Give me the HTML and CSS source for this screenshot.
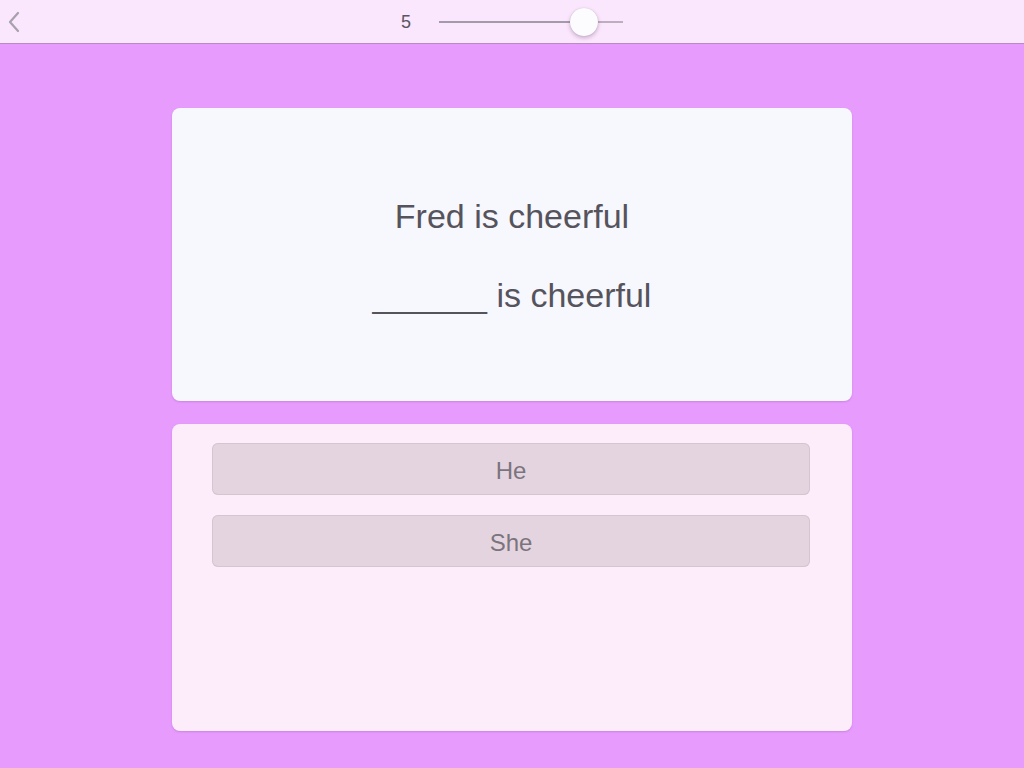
FILE: index.html
```html
<!DOCTYPE html>
<html>
<head>
<meta charset="utf-8">
<link rel="stylesheet" href="styles.css">
</head>
<body>
<header class="topbar">
  <button class="back" aria-label="Back">
    <svg width="14" height="22" viewBox="0 0 14 22"><path d="M11 2 L3 11 L11 20" fill="none" stroke="#a7a0ad" stroke-width="2.2" stroke-linecap="round" stroke-linejoin="round"/></svg>
  </button>
  <div class="level">
    <span class="num">5</span>
    <div class="slider">
      <div class="track-fill"></div>
      <div class="track-rest"></div>
      <div class="thumb"></div>
    </div>
  </div>
</header>
<main class="content">
  <section class="card question">
    <p class="line">Fred is cheerful</p>
    <p class="line"><span class="blank">_______</span> is cheerful</p>
  </section>
  <section class="card answers">
    <button class="choice">He</button>
    <button class="choice">She</button>
  </section>
</main>
</body>
</html>
```
FILE: styles.css
```css
html, body {
  margin: 0;
  padding: 0;
}
body {
  width: 1024px;
  height: 768px;
  background: #e79bfd;
  font-family: "Liberation Sans", Arial, sans-serif;
  overflow: hidden;
}
.topbar {
  height: 44px;
  background: #fbe7fd;
  border-bottom: 1px solid #b98bc4;
  box-sizing: border-box;
  display: flex;
  align-items: center;
}
.back {
  background: none;
  border: 0;
  padding: 0;
  margin-left: 7px;
  margin-top: 0;
  display: flex;
  width: 16px;
  height: 22px;
}
.level {
  display: flex;
  align-items: center;
  margin-left: 378px;
  padding-top: 1px;
}
.num {
  font-size: 18px;
  color: #5a5560;
  width: 38px;
}
.slider {
  position: relative;
  width: 184px;
  height: 30px;
  display: flex;
  align-items: center;
}
.track-fill {
  width: 145px;
  height: 2px;
  background: #a59aaa;
}
.track-rest {
  flex: 1;
  height: 2px;
  background: #bcaebf;
}
.thumb {
  position: absolute;
  left: 131px;
  top: 1px;
  width: 28px;
  height: 28px;
  border-radius: 50%;
  background: #fcfbfd;
  box-shadow: 0 2px 4px rgba(80, 40, 90, 0.3), 0 0 1px rgba(0,0,0,0.2);
}
.content {
  display: flex;
  flex-direction: column;
  align-items: center;
  gap: 23px;
  padding-top: 64px;
}
.card {
  width: 680px;
  border-radius: 8px;
  box-sizing: border-box;
  box-shadow: 0 1px 2px rgba(120, 60, 140, 0.25);
}
.question {
  height: 293px;
  background: #f7f7fe;
  display: flex;
  flex-direction: column;
  align-items: center;
  padding-top: 91px;
  gap: 44px;
}
.line {
  margin: 0;
  font-size: 34px;
  line-height: 35px;
  color: #55535c;
}
.blank {
  letter-spacing: -3px;
  margin-right: 3px;
}
.answers {
  height: 307px;
  background: #fdedfb;
  padding: 19px 42px 0 40px;
  display: flex;
  flex-direction: column;
  gap: 20px;
}
.choice {
  height: 52px;
  border: 0;
  border-radius: 6px;
  background: #e4d4df;
  font-family: "Liberation Sans", Arial, sans-serif;
  font-size: 24px;
  color: #7b747e;
  padding: 3px 0 0;
  box-shadow: inset 0 0 0 1px rgba(200, 180, 195, 0.5);
}
```
